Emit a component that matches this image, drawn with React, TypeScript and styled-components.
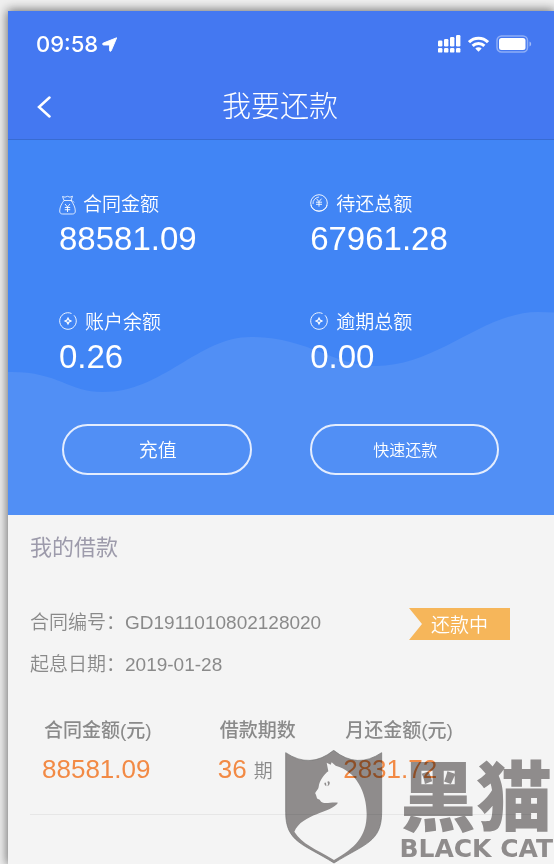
import React from "react";
import styled, { createGlobalStyle } from "styled-components";

const cjk = '"Liberation Sans", "Noto Sans CJK SC", sans-serif';

const GlobalStyle = createGlobalStyle`
  * { box-sizing: border-box; }
  body {
    margin: 0;
    background: #f0f0f0;
    font-family: ${cjk};
  }
`;

const Page = styled.div`
  position: relative;
  display: flex;
  min-height: 100vh;
  padding: 11px 0 0 8px;
  overflow: hidden;
`;

const Screen = styled.main`
  flex: 1;
  min-width: 0;
  background: #f4f4f4;
  box-shadow: 0 0 10px 1px rgba(0, 0, 0, 0.55);
`;

const Header = styled.header`
  background: #4478f1;
  border-bottom: 1px solid #386bd2;
  color: #fff;
`;

const StatusBar = styled.div`
  display: flex;
  align-items: center;
  gap: 4px;
  height: 66px;
  padding: 0 22px 0 28px;
`;

const Clock = styled.time`
  font: 500 22px/26px Inter, sans-serif;
`;

const StatusIcons = styled.div`
  display: flex;
  align-items: center;
  gap: 7px;
  margin-left: auto;
`;

const Icon = styled.svg`
  display: block;
  flex: none;
`;

const NavBar = styled.div`
  display: grid;
  grid-template-columns: 72px 1fr 74px;
  align-items: center;
  height: 62px;
  padding-bottom: 2px;
`;

const BackButton = styled.button`
  display: flex;
  align-items: center;
  height: 44px;
  padding: 0 0 0 28px;
  border: 0;
  background: none;
  color: inherit;
  cursor: pointer;
`;

const Title = styled.h1`
  margin: 0;
  font: 300 29px/44px ${cjk};
  text-align: center;
`;

const Hero = styled.section`
  position: relative;
  padding: 51px 0 40px;
  background: #4185f5;
  color: #fff;
`;

const Wave = styled.svg`
  position: absolute;
  inset: 0;
  width: 100%;
  height: 100%;
`;

const Figures = styled.dl`
  position: relative;
  display: grid;
  grid-template-columns: 46% 54%;
  row-gap: 50px;
  margin: 0;
`;

const Figure = styled.div`
  padding-left: 51px;
`;

const FigureLabel = styled.dt<{ $gap: number }>`
  display: flex;
  align-items: center;
  gap: ${(p) => p.$gap}px;
  font: 350 19px/28px ${cjk};
`;

const FigureValue = styled.dd`
  margin: 0;
  font-size: 33px;
  line-height: 40px;
`;

const Actions = styled.div`
  position: relative;
  display: grid;
  grid-template-columns: 1fr 1fr;
  gap: 58px;
  margin-top: 47px;
  padding: 0 55px 0 54px;
`;

const PillButton = styled.button<{ $small?: boolean }>`
  height: 51px;
  padding: 3px 0 0 2px;
  border: 2px solid #e4edfe;
  border-radius: 26px;
  background: transparent;
  color: #fff;
  font: 350 ${(p) => (p.$small ? 16 : 19)}px/28px ${cjk};
  cursor: pointer;
`;

const Loans = styled.section`
  padding: 17px 22px 0;
  color: #929292;
`;

const SectionTitle = styled.h2`
  margin: 0 0 38px;
  color: #9d9bab;
  font: 400 22px/32px ${cjk};
`;

const LoanHead = styled.div`
  display: flex;
  justify-content: space-between;
  padding-right: 22px;
`;

const Meta = styled.dl`
  display: grid;
  grid-template-columns: max-content max-content;
  margin: 0;
  font-size: 19px;
  font-weight: 350;
  line-height: 42px;
  color: #8a8a8a;
`;

const MetaCell = styled.dd`
  margin: 0;
`;

const Badge = styled.span`
  width: 101px;
  height: 32px;
  margin-top: 6px;
  padding-left: 22px;
  background: #f6b65a;
  clip-path: polygon(0 0, 100% 0, 100% 100%, 0 100%, 13px 50%);
  color: #fff;
  font-size: 19px;
  font-weight: 350;
  line-height: 36px;
`;

const LoanTable = styled.table`
  width: 100%;
  margin-top: 24px;
  border-collapse: collapse;
  table-layout: fixed;
`;

const HeadCell = styled.th<{ $width?: string }>`
  width: ${(p) => p.$width ?? "auto"};
  padding: 0 0 0 14px;
  font-size: 19px;
  font-weight: 500;
  line-height: 42px;
  text-align: left;
  white-space: nowrap;
  color: #8a8a8a;
`;

const ValueCell = styled.td`
  padding: 0 0 0 12px;
  font-size: 26px;
  line-height: 34px;
  color: #f28a45;
  vertical-align: baseline;
  white-space: nowrap;
`;

const Unit = styled.span`
  color: #8a8a8a;
  font-size: 19px;
  font-weight: 350;
`;

const Divider = styled.hr`
  height: 1px;
  margin: 25px 0 49px;
  border: 0;
  background: #e6e6e6;
`;

const Watermark = styled.aside`
  position: absolute;
  right: 1px;
  bottom: 0;
  display: flex;
  gap: 16px;
  color: #959292;
  mix-blend-mode: multiply;
  pointer-events: none;
`;

const Brand = styled.div`
  display: flex;
  flex-direction: column;
  align-items: center;
`;

const BrandName = styled.span`
  font: 900 76px/84px "Noto Sans CJK SC", sans-serif;
`;

const BrandLatin = styled.span`
  font: 700 25px/30px "DejaVu Sans", sans-serif;
  white-space: nowrap;
`;

const BagIcon = () => (
  <Icon width="17" height="20" viewBox="0 0 17 20" fill="none" stroke="#fff" strokeLinejoin="round" aria-hidden="true">
    <path d="M5 5.5 3.5 1.5 6 2.2 8.5 1.3 11 2.2 13.5 1.2 12 5.5M5 5.5h8l2 2M5 5.5C3 8 .7 12 .7 16c0 2 1 3 3 3h9.600c2 0 3-1 3-3 0-4-2.300-8-4.300-10.500" opacity=".8" />
    <path d="m6 9 2.500 3L11 9M8.500 12v5M5.800 12.500h5.400M5.800 14.700h5.400" opacity=".9" />
  </Icon>
);

const YenIcon = () => (
  <Icon width="18" height="22" viewBox="0 0 18 22" fill="none" stroke="#fff" aria-hidden="true">
    <circle cx="9" cy="9" r="8.300" opacity=".9" />
    <path d="M1 11a8 6 0 0 0 16 0M3 10a6.500 6.500 0 0 1 6-7" opacity=".8" />
    <path d="m6.500 4.700 2.500 3 2.500-3M9 7.700v5M6 8.200h6M6 10.300h6" opacity=".9" />
  </Icon>
);

const CoinIcon = () => (
  <Icon width="18" height="22" viewBox="0 0 18 22" fill="none" stroke="#fff" aria-hidden="true">
    <path d="M12.500 1.500A8.300 8.300 0 1 0 15 3.300" opacity=".9" />
    <path d="M9 6 10 8 12 9 10 10 9 12 8 10 6 9 8 8Z" strokeWidth="1.200" />
  </Icon>
);

const figures = [
  { label: "合同金额", value: "88581.09", icon: <BagIcon />, gap: 7 },
  { label: "待还总额", value: "67961.28", icon: <YenIcon />, gap: 8 },
  { label: "账户余额", value: "0.26", icon: <CoinIcon />, gap: 8 },
  { label: "逾期总额", value: "0.00", icon: <CoinIcon />, gap: 8 },
];

export default function App() {
  return (
    <>
      <GlobalStyle />
      <Page>
        <Screen>
          <Header>
            <StatusBar>
              <Clock>09:58</Clock>
              <Icon width="15" height="15" viewBox="0 0 16 16" aria-hidden="true">
                <path d="M15.700.8 9.800 14.700c-.4.900-1.700.7-1.700-.2V8.500H1.700C.5 8.500.3 7.100 1.300 6.500Z" fill="#fff" stroke="#fff" strokeWidth="1" strokeLinejoin="round" />
              </Icon>
              <StatusIcons>
                <Icon width="23" height="18" viewBox="0 0 23 18" fill="#fff" aria-hidden="true">
                  <rect x="0" y="5.500" width="4.400" height="6" rx="1.200" />
                  <rect x="6" y="4" width="4.400" height="7.500" rx="1.200" />
                  <rect x="12" y="2" width="4.400" height="9.500" rx="1.200" />
                  <rect x="18" y="0" width="4.400" height="11.500" rx="1.200" />
                  <rect x="0" y="13" width="4.400" height="4.600" rx="1.200" />
                  <rect x="6" y="13" width="4.400" height="4.600" rx="1.200" />
                  <rect x="12" y="13" width="4.400" height="4.600" rx="1.200" />
                  <rect x="18" y="13" width="4.400" height="4.600" rx="1.200" />
                </Icon>
                <Icon width="21" height="16" viewBox="0 0 21 16" fill="none" stroke="#fff" strokeWidth="3" aria-hidden="true">
                  <path d="M1 6.200a13.600 13.600 0 0 1 19 0M4.600 9.900a8.400 8.400 0 0 1 11.800 0" />
                  <path d="M10.500 15.700 7.300 12.500a4.600 4.600 0 0 1 6.400 0Z" fill="#fff" stroke="none" />
                </Icon>
                <Icon width="36" height="18" viewBox="0 0 36 18" aria-hidden="true">
                  <rect x="1" y="1" width="30.500" height="16" rx="4.500" fill="none" stroke="#fff" strokeOpacity=".4" strokeWidth="1.500" />
                  <rect x="3" y="3" width="26.500" height="12" rx="2.500" fill="#fff" />
                  <path d="M33.500 6.500c2.200.8 2.200 4.200 0 5Z" fill="#fff" opacity=".5" />
                </Icon>
              </StatusIcons>
            </StatusBar>
            <NavBar>
              <BackButton type="button" aria-label="返回">
                <Icon width="16" height="22" viewBox="0 0 16 22" fill="none" stroke="#fff" strokeWidth="2.500" strokeLinecap="round" aria-hidden="true">
                  <path d="M13.500 1.500 3 11l10.500 9.500" />
                </Icon>
              </BackButton>
              <Title>我要还款</Title>
            </NavBar>
          </Header>

          <Hero>
            <Wave viewBox="0 0 546 375" preserveAspectRatio="none" aria-hidden="true">
              <path d="M0 232C50 231 60 252 95 252C155 252 190 197 243 197C300 197 325 226 368 226C430 226 475 172 530 172L546 172.500V375H0Z" fill="#518ff5" />
            </Wave>
            <Figures>
              {figures.map((f) => (
                <Figure key={f.label}>
                  <FigureLabel $gap={f.gap}>
                    {f.icon}
                    {f.label}
                  </FigureLabel>
                  <FigureValue>{f.value}</FigureValue>
                </Figure>
              ))}
            </Figures>
            <Actions>
              <PillButton type="button">充值</PillButton>
              <PillButton type="button" $small>快速还款</PillButton>
            </Actions>
          </Hero>

          <Loans>
            <SectionTitle>我的借款</SectionTitle>
            <LoanHead>
              <Meta>
                <dt>合同编号：</dt>
                <MetaCell>GD1911010802128020</MetaCell>
                <dt>起息日期：</dt>
                <MetaCell>2019-01-28</MetaCell>
              </Meta>
              <Badge>还款中</Badge>
            </LoanHead>
            <LoanTable>
              <thead>
                <tr>
                  <HeadCell scope="col" $width="35%">合同金额(元)</HeadCell>
                  <HeadCell scope="col" $width="25%">借款期数</HeadCell>
                  <HeadCell scope="col">月还金额(元)</HeadCell>
                </tr>
              </thead>
              <tbody>
                <tr>
                  <ValueCell>88581.09</ValueCell>
                  <ValueCell>36 <Unit>期</Unit></ValueCell>
                  <ValueCell>2831.72</ValueCell>
                </tr>
              </tbody>
            </LoanTable>
            <Divider />
          </Loans>
        </Screen>

        <Watermark>
          <Icon width="98" height="114" viewBox="24 58 294 342" aria-hidden="true">
            <path d="M26 66Q100 116 170 59Q240 116 314 66V245C314 335 262 340 171 397C80 340 26 335 26 245Z" fill="currentColor" stroke="#777" strokeWidth="2" />
            <path d="M149 96 161 102 164 95 176 105C238 122 269 185 269 250C269 318 234 352 171 388C115 354 75 340 52 303C75 248 165 246 183 216C166 213 152 219 138 216C130 214 131 208 125 206C117 203 120 196 115 189C114 182 124 178 125 168C128 150 140 132 154 122Z" fill="#fff" />
            <path d="M142 157Q148 151 148 167Q142 165 142 157ZM151 153Q160 149 158 160Q155 166 151 167Q156 160 151 153Z" fill="currentColor" />
          </Icon>
          <Brand>
            <BrandName>黑猫</BrandName>
            <BrandLatin>BLACK CAT</BrandLatin>
          </Brand>
        </Watermark>
      </Page>
    </>
  );
}
